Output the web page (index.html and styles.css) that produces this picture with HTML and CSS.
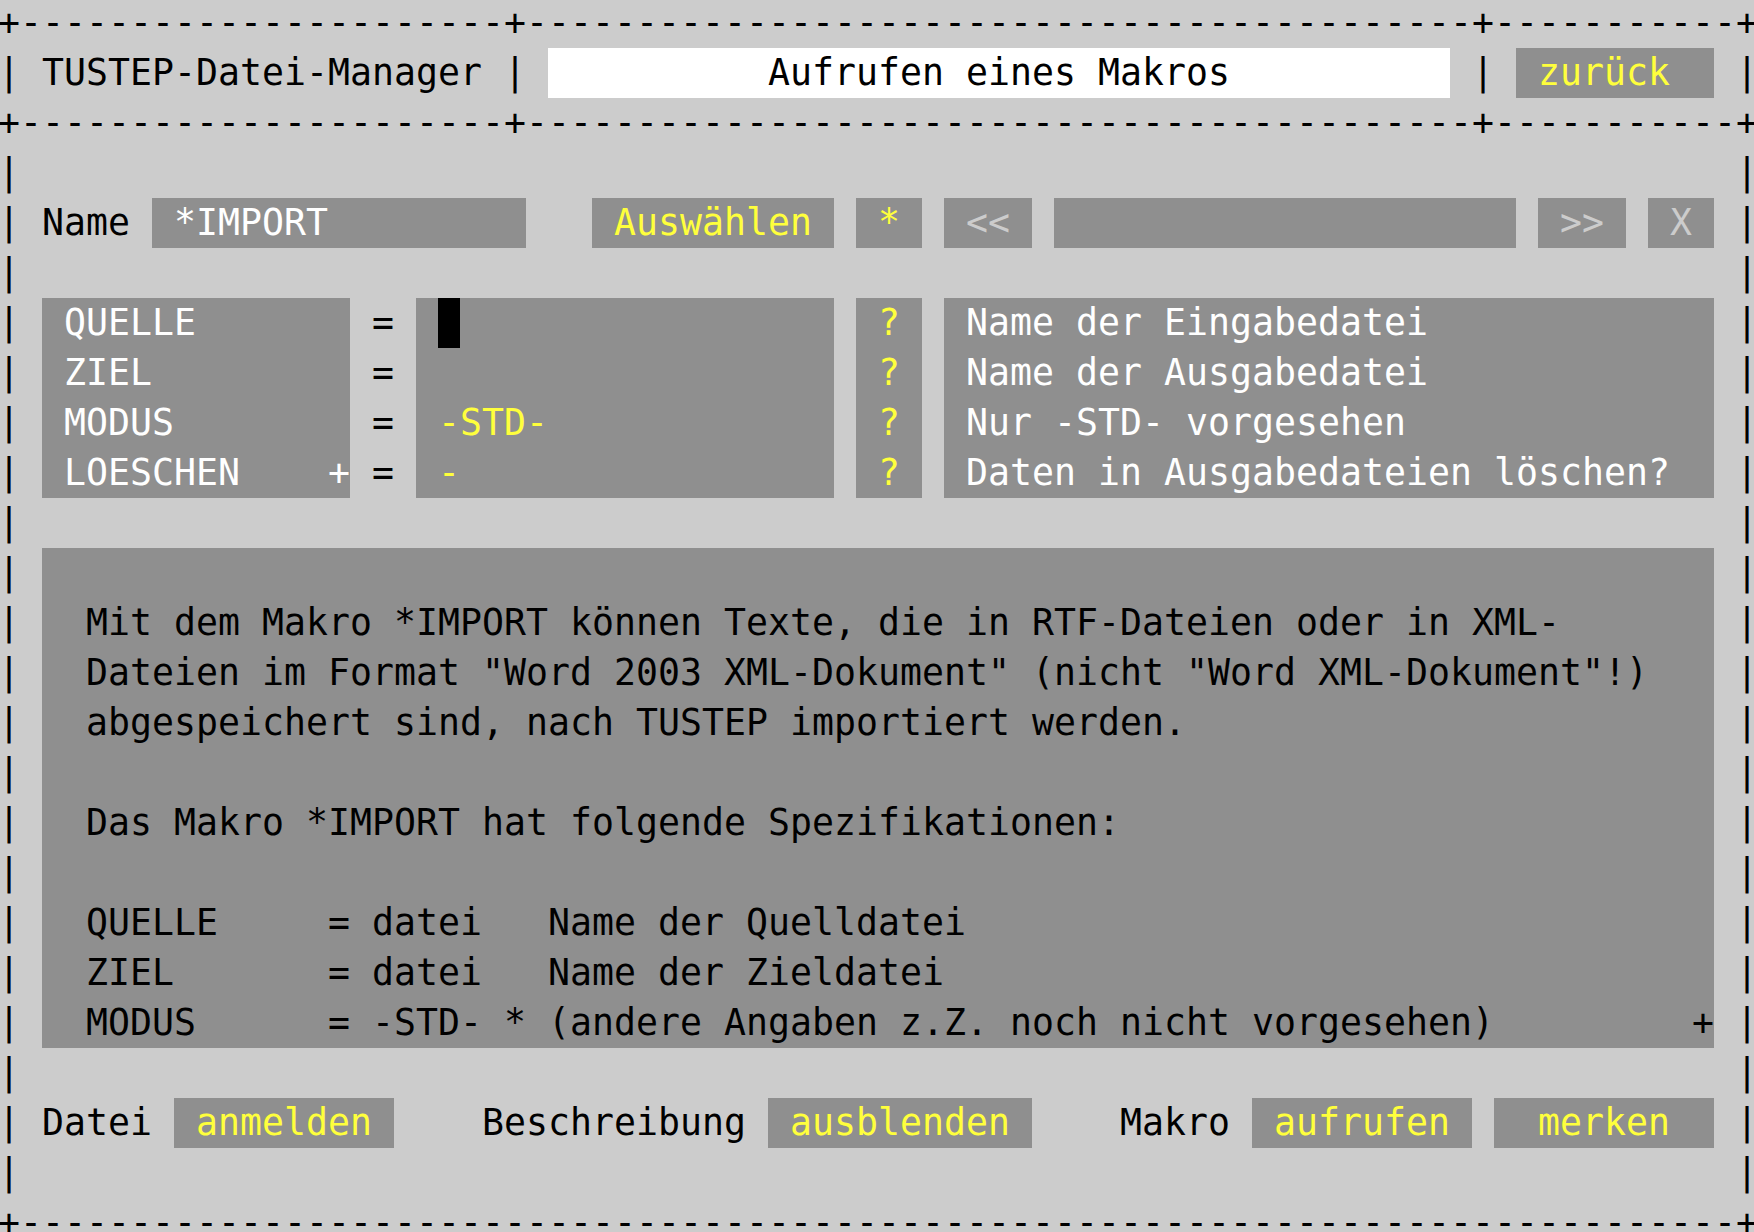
FILE: index.html
```html
<!DOCTYPE html>
<html lang="de">
<head>
<meta charset="utf-8">
<title>TUSTEP-Datei-Manager</title>
<link rel="stylesheet" href="styles.css">
</head>
<body>
<div class="screen">
<div class="row">+----------------------+-------------------------------------------+-----------+</div>
<div class="row">| TUSTEP-Datei-Manager | <span class="box title">          Aufrufen eines Makros          </span> | <span class="box y"> zurück  </span> |</div>
<div class="row">+----------------------+-------------------------------------------+-----------+</div>
<div class="row">|                                                                              |</div>
<div class="row">| Name <span class="box w"> *IMPORT         </span>   <span class="box y"> Auswählen </span> <span class="box y"> * </span> <span class="box g"> &lt;&lt; </span> <span class="box">                     </span> <span class="box g"> &gt;&gt; </span> <span class="box g"> X </span> |</div>
<div class="row">|                                                                              |</div>
<div class="row">| <span class="box w"> QUELLE       </span> = <span class="box y"> <span class="cursor"> </span>                 </span> <span class="box y"> ? </span> <span class="box w"> Name der Eingabedatei             </span> |</div>
<div class="row">| <span class="box w"> ZIEL         </span> = <span class="box y">                   </span> <span class="box y"> ? </span> <span class="box w"> Name der Ausgabedatei             </span> |</div>
<div class="row">| <span class="box w"> MODUS        </span> = <span class="box y"> -STD-             </span> <span class="box y"> ? </span> <span class="box w"> Nur -STD- vorgesehen              </span> |</div>
<div class="row">| <span class="box w"> LOESCHEN    +</span> = <span class="box y"> -                 </span> <span class="box y"> ? </span> <span class="box w"> Daten in Ausgabedateien löschen?  </span> |</div>
<div class="row">|                                                                              |</div>
<div class="row">| <span class="box">                                                                            </span> |</div>
<div class="row">| <span class="box">  Mit dem Makro *IMPORT können Texte, die in RTF-Dateien oder in XML-       </span> |</div>
<div class="row">| <span class="box">  Dateien im Format "Word 2003 XML-Dokument" (nicht "Word XML-Dokument"!)   </span> |</div>
<div class="row">| <span class="box">  abgespeichert sind, nach TUSTEP importiert werden.                        </span> |</div>
<div class="row">| <span class="box">                                                                            </span> |</div>
<div class="row">| <span class="box">  Das Makro *IMPORT hat folgende Spezifikationen:                           </span> |</div>
<div class="row">| <span class="box">                                                                            </span> |</div>
<div class="row">| <span class="box">  QUELLE     = datei   Name der Quelldatei                                  </span> |</div>
<div class="row">| <span class="box">  ZIEL       = datei   Name der Zieldatei                                   </span> |</div>
<div class="row">| <span class="box">  MODUS      = -STD- * (andere Angaben z.Z. noch nicht vorgesehen)         +</span> |</div>
<div class="row">|                                                                              |</div>
<div class="row">| Datei <span class="box y"> anmelden </span>    Beschreibung <span class="box y"> ausblenden </span>    Makro <span class="box y"> aufrufen </span> <span class="box y">  merken  </span> |</div>
<div class="row">|                                                                              |</div>
<div class="row">+------------------------------------------------------------------------------+</div>
</div>
</body>
</html>
```
FILE: styles.css
```css
html, body {
  margin: 0;
  padding: 0;
  background: #cccccc;
  overflow: hidden;
  height: 1232px;
}

.screen {
  margin: -2px 0 0 -2px;
  font-family: "DejaVu Sans Mono", monospace;
  font-size: 36.5px;
  line-height: 50px;
  letter-spacing: 0.025px;
  color: #000000;
}

.row {
  height: 50px;
  line-height: 50px;
  white-space: pre;
}

.box {
  display: inline-block;
  vertical-align: top;
  height: 50px;
  line-height: 50px;
  background: #8f8f8f;
  color: #000000;
}

.box.title {
  background: #ffffff;
  color: #000000;
}

.box.w { color: #ffffff; }
.box.y { color: #ffff3c; }
.box.g { color: #cccccc; }

.cursor {
  display: inline-block;
  vertical-align: top;
  height: 50px;
  background: #000000;
}
```
